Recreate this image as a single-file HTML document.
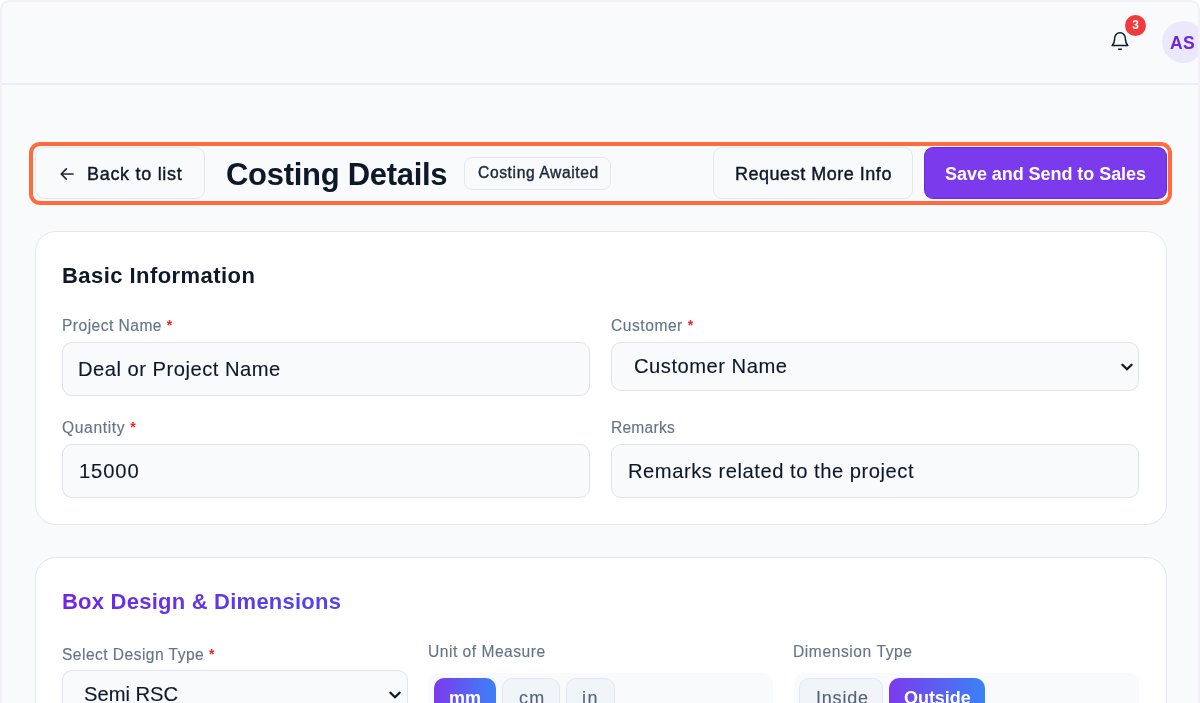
<!DOCTYPE html>
<html lang="en">
<head>
<meta charset="utf-8">
<title>Costing Details</title>
<style>
*{box-sizing:border-box;margin:0;padding:0}
html,body{width:1200px;height:703px;overflow:hidden;background:#fff}
body{font-family:"Liberation Sans",sans-serif;color:#0f172a;position:relative}
.frame{position:absolute;left:0;top:0;width:1200px;height:720px;border:2px solid #f3f1f7;border-radius:9px 9px 0 0;background:#f8fafc;overflow:hidden}
.abs{position:absolute;white-space:nowrap}
.abs,.lbl,.val{will-change:transform}
.med{-webkit-text-stroke:0.4px currentColor}
.lbl{-webkit-text-stroke:0.15px currentColor}
.val{-webkit-text-stroke:0.12px currentColor}
.topline{position:absolute;left:0;top:81px;width:1196px;height:2px;background:#e9eef5}
.hl{position:absolute;left:27px;top:140px;width:1143px;height:63px;border:4px solid #ff6b3d;border-radius:11px}
.btn{position:absolute;border:1px solid #e2e8f0;border-radius:9px;background:#f8fafc}
.card{position:absolute;background:#fff;border:1px solid #e2e8f0;border-radius:21px}
.field{position:absolute;background:#f8fafc;border:1px solid #dde4ee;border-radius:10px}
.lbl{position:absolute;white-space:nowrap;font-size:15.6px;color:#64748b;line-height:18px}
.lbl b{color:#f02222;font-weight:700;font-size:14px;position:relative;top:-1px;-webkit-text-stroke:0}
.val{position:absolute;white-space:nowrap;font-size:20.2px;color:#0f172a;line-height:24px}
.seg{position:absolute;background:#f8fafc;border-radius:11px}
.sbtn{position:absolute;border:1px solid #e2e8f0;border-radius:10px 10px 0 0;background:#f1f5f9}
.sbtn.on{border:0;background:linear-gradient(90deg,#7c3aed,#3b82f6)}
</style>
</head>
<body>
<div class="frame">
  <!-- top bar -->
  <div class="topline"></div>
  <svg class="abs" style="left:1107px;top:26px" width="22" height="24" viewBox="0 0 22 24" fill="none" stroke="#0f172a" stroke-width="1.5" stroke-linecap="round" stroke-linejoin="round">
    <path d="M3.2 17.6h15.6c-1.6-1.7-2.4-3.4-2.4-6.6 0-3.6-2.2-6.2-5.4-6.2S5.600 7.400 5.600 11c0 3.200-.8 4.900-2.400 6.600z"/>
    <path d="M9.600 21.200h2.800"/>
  </svg>
  <div class="abs" style="left:1123px;top:13px;width:21px;height:21px;border-radius:50%;background:#ef3b3b;color:#fff;font-weight:700;font-size:12px;line-height:21px;text-align:center">3</div>
  <div class="abs" style="left:1159.5px;top:18.5px;width:42px;height:42px;border-radius:50%;background:#ece8fc"></div>
  <div class="abs" id="t_as" style="left:1168px;top:29.500px;font-size:17.6px;line-height:22px;font-weight:700;color:#6d28d9;letter-spacing:0.3px">AS</div>

  <!-- highlight -->
  <div class="hl"></div>

  <!-- header row -->
  <div class="btn" style="left:33px;top:145.400px;width:170px;height:51.2px"></div>
  <svg class="abs" style="left:55px;top:162px" width="20" height="20" viewBox="0 0 20 20" fill="none" stroke="#1e293b" stroke-width="1.7" stroke-linecap="round" stroke-linejoin="round">
    <path d="M16 10H4.500M9.300 4.800 4.200 10l5.100 5.200"/>
  </svg>
  <div class="abs med" id="t_back" style="left:85.2px;top:161px;font-size:18px;line-height:22px;color:#0f172a;letter-spacing:0.7px">Back to list</div>

  <div class="abs" id="t_h1" style="left:224px;top:155px;font-size:31px;line-height:36px;font-weight:700;color:#0f172a;letter-spacing:-0.29px">Costing Details</div>

  <div class="btn" style="left:462px;top:155px;width:147px;height:33px;border-radius:8px"></div>
  <div class="abs med" id="t_badge" style="left:475.6px;top:162px;font-size:15.6px;line-height:18px;color:#1e293b;letter-spacing:0.62px">Costing Awaited</div>

  <div class="btn" style="left:711.3px;top:145.400px;width:200px;height:51.2px"></div>
  <div class="abs med" id="t_req" style="left:733.2px;top:161px;font-size:18px;line-height:22px;color:#0f172a;letter-spacing:0.52px">Request More Info</div>

  <div class="btn" style="left:922.2px;top:145.400px;width:242.4px;height:51.2px;background:#7c3aed;border-color:#6d28d9"></div>
  <div class="abs" id="t_save" style="left:943.4px;top:161px;font-size:18px;line-height:22px;color:#fff;font-weight:700;letter-spacing:-0.05px">Save and Send to Sales</div>

  <!-- Basic Information card -->
  <div class="card" style="left:33px;top:229px;width:1132px;height:294px"></div>
  <div class="abs" id="t_basic" style="left:60px;top:261px;font-size:22px;line-height:26px;font-weight:700;color:#0f172a;letter-spacing:0.44px">Basic Information</div>

  <div class="lbl" id="t_l1" style="left:59.5px;top:315px;letter-spacing:0.46px">Project Name <b>*</b></div>
  <div class="field" style="left:60px;top:340px;width:528px;height:54px"></div>
  <div class="val" id="t_v1" style="left:75.5px;top:355px;letter-spacing:0.49px">Deal or Project Name</div>

  <div class="lbl" id="t_l2" style="left:609px;top:315px;letter-spacing:0.53px">Customer <b>*</b></div>
  <div class="field" style="left:609px;top:340px;width:528px;height:49px"></div>
  <div class="val" id="t_v2" style="left:631.6px;top:352px;letter-spacing:0.5px">Customer Name</div>
  <svg class="abs" style="left:1117px;top:357.5px" width="16" height="14" viewBox="0 0 16 14" fill="none" stroke="#0f172a" stroke-width="2.3" stroke-linecap="round" stroke-linejoin="miter"><path d="M3.400 4.700 8 9.200l4.600-4.500"/></svg>

  <div class="lbl" id="t_l3" style="left:60px;top:417px;letter-spacing:0.64px">Quantity <b>*</b></div>
  <div class="field" style="left:60px;top:442px;width:528px;height:54px"></div>
  <div class="val" id="t_v3" style="left:76.5px;top:457px;letter-spacing:0.88px">15000</div>

  <div class="lbl" id="t_l4" style="left:608.7px;top:417px;letter-spacing:0.22px">Remarks</div>
  <div class="field" style="left:609px;top:442px;width:528px;height:54px"></div>
  <div class="val" id="t_v4" style="left:625.7px;top:457px;letter-spacing:0.52px">Remarks related to the project</div>

  <!-- Box Design card -->
  <div class="card" style="left:33px;top:555px;width:1132px;height:300px"></div>
  <div class="abs" id="t_box" style="left:60px;top:587px;font-size:22px;line-height:26px;font-weight:700;background:linear-gradient(90deg,#7026e6,#5145ee);-webkit-background-clip:text;background-clip:text;color:transparent;letter-spacing:0.23px">Box Design &amp; Dimensions</div>

  <div class="lbl" id="t_l5" style="left:60.1px;top:644px;letter-spacing:0.45px">Select Design Type <b>*</b></div>
  <div class="field" style="left:60px;top:668px;width:346px;height:54px"></div>
  <div class="val" id="t_v5" style="left:81.7px;top:680px;letter-spacing:-0.01px">Semi RSC</div>
  <svg class="abs" style="left:385.2px;top:686px" width="16" height="14" viewBox="0 0 16 14" fill="none" stroke="#0f172a" stroke-width="2.3" stroke-linecap="round" stroke-linejoin="miter"><path d="M3.400 4.700 8 9.200l4.600-4.500"/></svg>

  <div class="lbl" id="t_l6" style="left:426px;top:641px;letter-spacing:0.5px">Unit of Measure</div>
  <div class="seg" style="left:426px;top:671px;width:345px;height:60px"></div>
  <div class="sbtn on" style="left:431.7px;top:676.3px;width:62.4px;height:50px"></div>
  <div class="sbtn" style="left:500px;top:676.3px;width:58px;height:50px"></div>
  <div class="sbtn" style="left:564px;top:676.3px;width:48.6px;height:50px"></div>
  <div class="abs" id="t_mm" style="left:447px;top:685px;font-size:18px;line-height:22px;color:#fff;font-weight:700;letter-spacing:0.0px">mm</div>
  <div class="abs" id="t_cm" style="left:516.5px;top:685px;font-size:18px;line-height:22px;color:#56647b;letter-spacing:1.3px;-webkit-text-stroke:0.15px currentColor">cm</div>
  <div class="abs" id="t_in" style="left:579.9px;top:685px;font-size:18px;line-height:22px;color:#56647b;letter-spacing:1.4px;-webkit-text-stroke:0.15px currentColor">in</div>

  <div class="lbl" id="t_l7" style="left:790.9px;top:641px;letter-spacing:0.57px">Dimension Type</div>
  <div class="seg" style="left:792px;top:671px;width:345px;height:60px"></div>
  <div class="sbtn" style="left:797px;top:676px;width:84px;height:50px"></div>
  <div class="sbtn on" style="left:887px;top:676px;width:96px;height:50px"></div>
  <div class="abs" id="t_inside" style="left:814px;top:685px;font-size:18px;line-height:22px;color:#56647b;letter-spacing:0.8px;-webkit-text-stroke:0.15px currentColor">Inside</div>
  <div class="abs" id="t_outside" style="left:901.9px;top:685px;font-size:18px;line-height:22px;color:#fff;font-weight:700;letter-spacing:-0.05px">Outside</div>
</div>
</body>
</html>
